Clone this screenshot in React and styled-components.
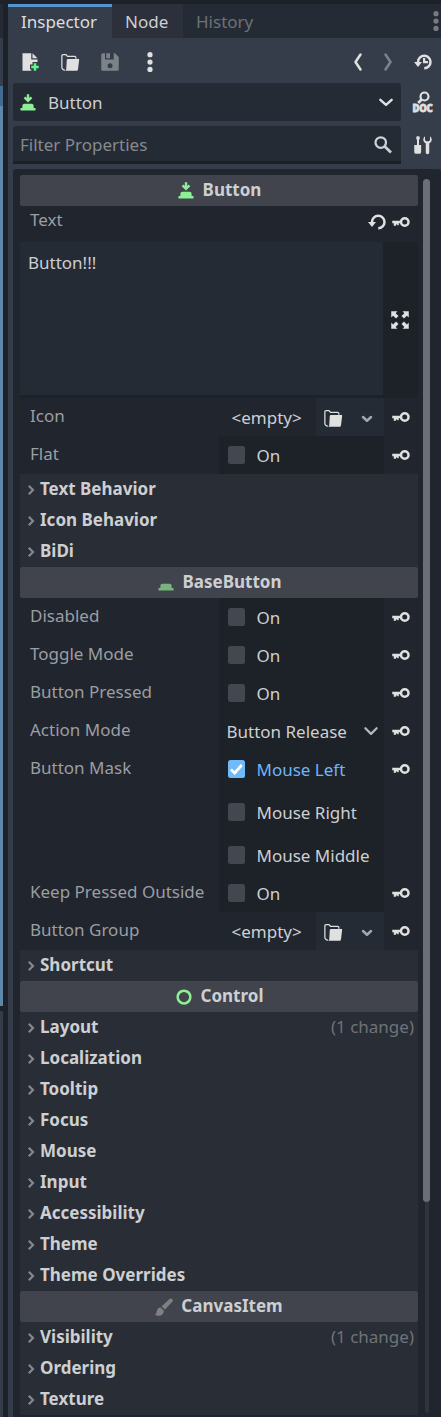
import React from "react";
import styled, { createGlobalStyle } from "styled-components";

const Global = createGlobalStyle`
  * { box-sizing: border-box; }
  body { margin: 0; background: #1d2229; overflow: hidden; }
`;

const Screen = styled.div`
  display: flex;
  width: 441px;
  height: 1417px;
  overflow: hidden;
  background: #1d2229;
  color: #cdcfd2;
  font: 17px/24px "Noto Sans", sans-serif;
  white-space: nowrap;
`;

const Viewport = styled.div`
  width: 8px;
  flex: none;
  display: flex;
  flex-direction: column;
  padding-right: 5px;
`;
const Strip = styled.div`
  height: ${(p) => p.$h}px;
  flex: none;
  background: ${(p) => p.$c};
`;

const Dock = styled.div`
  width: 433px;
  flex: none;
  display: flex;
  flex-direction: column;
  padding-top: 4px;
`;
const TabBar = styled.div`
  height: 34px;
  flex: none;
  display: flex;
  background: #252b34;
`;
const Tab = styled.div`
  width: ${(p) => p.$w}px;
  padding: ${(p) => (p.$active ? "3px" : "6px")} 0 0 13px;
  color: ${(p) => (p.$active ? "#dcdddf" : p.$dim ? "#6c7178" : "#cdcfd2")};
  background: ${(p) => (p.$active ? "#363d4a" : p.$dim ? "#252b34" : "#2b303b")};
  border-top: ${(p) => (p.$active ? "3px solid #5694ce" : "none")};
`;
const TabMenu = styled.div`
  margin-left: auto;
  width: 15px;
  padding-top: 7px;
`;
const DockBody = styled.div`
  flex: 1;
  min-height: 0;
  background: #363d4a;
  padding-left: 5px;
  display: flex;
  flex-direction: column;
`;
const Toolbar = styled.div`
  height: 45px;
  padding: 3px 8px 0 7px;
  display: flex;
  align-items: center;
  gap: 20px;
  flex: none;
`;
const History = styled.div`
  margin-left: auto;
  display: flex;
  gap: 10px;
`;
const RecentButton = styled.div`
  padding-left: 5px;
`;
const FieldRow = styled.div`
  display: flex;
  height: 38px;
  margin-bottom: 5px;
  flex: none;
`;
const Field = styled.div`
  width: 388px;
  background: #252b34;
  border-radius: 3px 3px ${(p) => (p.$line ? "0 0" : "3px 3px")};
  border-bottom: ${(p) => (p.$line ? "3px solid #1c2027" : "none")};
  padding: ${(p) => (p.$line ? "2px 8px 0 7px" : "1px 5px 0 5px")};
  display: flex;
  align-items: center;
  color: ${(p) => (p.$line ? "#868a8f" : "#cdcfd2")};
`;
const FieldText = styled.span`
  flex: 1;
  padding-left: ${(p) => p.$pad || 0}px;
`;
const SideButton = styled.div`
  width: 40px;
  display: flex;
  align-items: center;
  justify-content: center;
  padding-left: 4px;
`;
const DocButton = styled(SideButton)`
  flex-direction: column;
  justify-content: flex-start;
  padding: 8px 0 0 3px;
`;
const DocText = styled.span`
  font: 900 9.5px/9px "Noto Sans", sans-serif;
  color: #e0e0e0;
  -webkit-text-stroke: 0.7px #e0e0e0;
  letter-spacing: -0.2px;
  transform: scaleY(1.12);
`;

const Panel = styled.div`
  flex: 1;
  min-height: 0;
  background: #21252e;
  border-radius: 3px 3px 0 0;
  padding: 6px 0 0 7px;
  display: flex;
`;
const List = styled.div`
  width: 398px;
  flex: none;
`;
const Category = styled.div`
  height: 31px;
  background: #41444c;
  border-radius: 2px;
  display: flex;
  justify-content: center;
  align-items: center;
  gap: 7px;
  padding: 0 1px 2px 0;
  font-weight: 700;
  svg { margin-top: 3px; }
`;
const Section = styled.div`
  height: 31px;
  background: #292d35;
  display: flex;
  align-items: center;
  padding: 0 4px 1px 6px;
`;
const SectionName = styled.span`
  flex: 1;
  font-weight: 700;
  padding-left: 4px;
`;
const Changes = styled.span`
  color: #6f7379;
`;
const Property = styled.div`
  display: flex;
  height: ${(p) => p.$h || 38}px;
`;
const Label = styled.div`
  width: ${(p) => p.$w || 199}px;
  padding: ${(p) => p.$top || 6}px 0 0 10px;
  color: #9b9ea2;
`;
const Value = styled.div`
  width: 165px;
  background: ${(p) => (p.$plain ? "transparent" : "#1d2128")};
  border-radius: 2px;
  display: flex;
  flex-direction: column;
  gap: 5px;
`;
const Check = styled.div`
  height: 38px;
  display: flex;
  align-items: center;
  padding: 1px 0 0 9px;
  gap: 11.5px;
  color: ${(p) => (p.$on ? "#6fb5f7" : "#cdcfd2")};
`;
const Box = styled.div`
  width: 17px;
  height: 18px;
  margin-top: -1px;
  border-radius: 2.5px;
  background: ${(p) => (p.$on ? "#70bafa" : "#434750")};
  display: flex;
  svg { width: 17px; height: 18px; }
`;
const Choice = styled.div`
  height: 38px;
  display: flex;
  align-items: center;
  justify-content: space-between;
  padding: 1px 3px 0 7.5px;
`;
const Resource = styled.div`
  display: flex;
  height: 38px;
`;
const Empty = styled.div`
  width: 97px;
  padding: 8px 0 0 12.5px;
`;
const ResButton = styled.div`
  width: ${(p) => p.$w}px;
  background: #252b34;
  display: flex;
  align-items: center;
  justify-content: center;
  padding-top: 1px;
`;
const Keys = styled.div`
  padding: ${(p) => p.$top || 9}px 0 0 7px;
  display: flex;
  gap: 4px;
`;
const Editor = styled.div`
  display: flex;
  height: 156px;
`;
const TextArea = styled.div`
  width: 363px;
  background: #252b34;
  border-radius: 3px 3px 0 0;
  border-bottom: 3px solid #1d2128;
  padding: 9px 8px;
`;
const Expand = styled.div`
  width: 35px;
  background: #1d2128;
  border-radius: 0 3px 3px 0;
  display: flex;
  align-items: center;
  justify-content: center;
  padding-right: 1px;
`;
const ScrollTrack = styled.div`
  width: 17px;
  padding: 4px 0 4px 5px;
  display: flex;
  flex-direction: column;
`;
const Grabber = styled.div`
  width: 7px;
  height: 1023px;
  flex: none;
  border-radius: 4px;
  background: #6c6f75;
`;
const Track = styled.div`
  width: 4px;
  margin-left: 2px;
  flex: 1;
  background: #30343d;
  border-radius: 0 0 2px 2px;
`;

const Svg = styled.svg`
  width: 20px;
  height: 20px;
  flex: none;
  display: block;
  overflow: visible;
`;
const Icon = ({ children, ...rest }) => (
  <Svg viewBox="0 0 16 16" fill="#e0e0e0" {...rest}>{children}</Svg>
);

const NewIcon = () => (
  <Icon>
    <path d="M2 1h7v5h5v2h-4v2H8v4h1v1H2z" />
    <path d="M10 1v4h4z" />
    <path fill="#5ff48a" d="M11 9h2v2h2v2h-2v2h-2v-2H9v-2h2z" />
  </Icon>
);
const LoadIcon = () => (
  <Icon>
    <path fill="none" stroke="#e0e0e0" d="M4 14.4a2.2 2.2 0 0 1-2.5-2.2V3a1 1 0 0 1 1-1h2.3l1.2 1.5h5.7a1 1 0 0 1 1 1v.8" />
    <path d="M6.3 5.5h8.2a.8.8 0 0 1 .8.9l-.9 7.4a1.3 1.3 0 0 1-1.3 1.2H3.6c1 0 1.3-.6 1.4-1.5l.4-7a1 1 0 0 1 .9-1z" />
  </Icon>
);
const SaveIcon = () => (
  <Icon fill="#7d8189">
    <path fillRule="evenodd" d="M2.2 1H4v5h7V1h1l3 3v9.8a1.2 1.2 0 0 1-1.2 1.2H2.2A1.2 1.2 0 0 1 1 13.8V2.2A1.2 1.2 0 0 1 2.2 1zM8 9a2 2 0 1 0 0 4 2 2 0 0 0 0-4z" />
    <path d="M5 1h3v4H5z" />
  </Icon>
);
const DotsIcon = ({ color = "#e0e0e0" }) => (
  <Icon fill={color}>
    <circle cx="8" cy="2.1" r="2.1" />
    <circle cx="8" cy="8" r="2.1" />
    <circle cx="8" cy="13.9" r="2.1" />
  </Icon>
);
const Stroke = ({ d, color = "#e0e0e0", w = 2 }) => (
  <Icon>
    <path d={d} fill="none" stroke={color} strokeWidth={w} strokeLinecap="round" strokeLinejoin="round" />
  </Icon>
);
const RevertIcon = ({ clock }) => (
  <Icon>
    <path d="M4 9V8a5 5 0 1 1 5 5" fill="none" stroke="#e0e0e0" strokeWidth="2" />
    <path d="M.8 8h6.4L4 12z" />
    {clock && <path d="M8 4.8h1.8v2.4H12V9H8z" />}
  </Icon>
);
const KeyIcon = () => (
  <Icon>
    <circle cx="11" cy="8" r="3" fill="none" stroke="#e0e0e0" strokeWidth="2" />
    <path d="M1 7h7.4v2H6.2v1.6H5V10H4v1H2.2V9H1z" />
  </Icon>
);
const base = "M5.2 8.5h5.6A1.7 1.7 0 0 1 12.5 10.2V12H14v2H2v-2h1.5v-1.8A1.7 1.7 0 0 1 5.2 8.5z";
const ButtonIcon = () => (
  <Icon fill="#8eef97">
    <path d="M8 1v4.5M5.2 3.5L8 6.2l2.8-2.7" fill="none" stroke="#8eef97" strokeWidth="1.9" />
    <path d={base} />
  </Icon>
);
const BaseButtonIcon = () => (
  <Icon fill="#78b37d">
    <path d={base} />
  </Icon>
);
const ControlIcon = () => (
  <Icon>
    <circle cx="8" cy="8" r="5.1" fill="none" stroke="#8eef97" strokeWidth="2" />
  </Icon>
);
const BrushIcon = () => (
  <Icon fill="#808080">
    <path d="M13.2 1.2a1.6 1.6 0 0 1 1.6 2.4L8.8 10 6 7.500l6.400-6a1.500 1.500 0 0 1 .8-.3z" />
    <path d="M5.200 8.400l2.600 2.400c.1 2.600-1.700 4.200-3.800 4.200-1.300 0-2.500-.5-3.400-1.500 1.400 0 1.400-.8 1.600-2.200.3-1.700 1.400-2.700 3-2.900z" />
  </Icon>
);
const ExpandIcon = () => (
  <Icon>
    {[0, 90, 180, 270].map((a) => (
      <path key={a} transform={`rotate(${a} 8 8)`} d="M1 1h5L4.500 2.500l2.300 2.300-2 2-2.300-2.300L1 6z" />
    ))}
  </Icon>
);
const SearchIcon = () => (
  <Icon>
    <circle cx="6.2" cy="6" r="4.2" fill="none" stroke="#cfd1d4" strokeWidth="1.8" />
    <path d="M9.200 9l5.200 5" stroke="#cfd1d4" strokeWidth="2.2" />
  </Icon>
);
const ToolsIcon = () => (
  <Icon>
    <path d="M3 1h2l.5 1.500L4.800 4v4h1.700v5.500A1.500 1.500 0 0 1 5 15H2.500A1.500 1.500 0 0 1 1 13.500V8h2.200V4l-.7-1.500z" />
    <path d="M9.600 1A3.300 3.300 0 0 0 8.200 3.600c0 1.300.8 2.500 2 3V14a1.400 1.400 0 0 0 2.800 0V6.600c1.200-.5 2-1.700 2-3A3.300 3.300 0 0 0 13.600 1v3.100l-1 .9h-2l-1-.9z" />
  </Icon>
);
const LensIcon = styled.svg`
  width: 20px;
  height: 13px;
  flex: none;
`;
const Arrow = styled.svg`
  width: 10px;
  height: 12px;
  flex: none;
  margin-top: 1px;
`;

const CheckRow = ({ on, children }) => (
  <Check $on={on}>
    <Box $on={on}>
      {on && (
        <svg viewBox="0 0 17 18">
          <path d="M3 9.500l3.700 3.500L13.800 5" fill="none" stroke="#fff" strokeWidth="2.700" />
        </svg>
      )}
    </Box>
    {children}
  </Check>
);
const Prop = ({ name, h, plain, children }) => (
  <Property $h={h}>
    <Label>{name}</Label>
    <Value $plain={plain}>{children}</Value>
    <Keys><KeyIcon /></Keys>
  </Property>
);
const Toggle = ({ name }) => <Prop name={name}><CheckRow>On</CheckRow></Prop>;
const ResourceProp = ({ name }) => (
  <Prop name={name} plain>
    <Resource>
      <Empty>&lt;empty&gt;</Empty>
      <ResButton $w={34}><LoadIcon /></ResButton>
      <ResButton $w={34}><Stroke d="M4.800 7.200L8 10.200l3.200-3" color="#a5a7aa" /></ResButton>
    </Resource>
  </Prop>
);
const Group = ({ name, changes }) => (
  <Section>
    <Arrow viewBox="0 0 10 12">
      <path d="M2.800 1.700L7 6l-4.200 4.300" fill="none" stroke="#85888d" strokeWidth="2.200" />
    </Arrow>
    <SectionName>{name}</SectionName>
    {changes && <Changes>{changes}</Changes>}
  </Section>
);

const controlGroups = ["Localization", "Tooltip", "Focus", "Mouse", "Input", "Accessibility", "Theme", "Theme Overrides"];

export default function App() {
  return (
    <Screen>
      <Global />
      <Viewport>
        <Strip $h={4} $c="#1d2229" />
        <Strip $h={34} $c="#252b34" />
        <Strip $h={48} $c="#363d4a" />
        <Strip $h={20} $c="#426b92" />
        <Strip $h={103} $c="#5d88aa" />
        <Strip $h={1} $c="#a0709c" />
        <Strip $h={796} $c="#5d88aa" />
        <Strip $h={5} $c="#1d2229" />
        <Strip $h={406} $c="#363d4a" />
      </Viewport>
      <Dock>
        <TabBar>
          <Tab $w={104} $active>Inspector</Tab>
          <Tab $w={71}>Node</Tab>
          <Tab $w={90} $dim>History</Tab>
          <TabMenu><DotsIcon color="#777a7f" /></TabMenu>
        </TabBar>
        <DockBody>
          <Toolbar>
            <NewIcon />
            <LoadIcon />
            <SaveIcon />
            <DotsIcon />
            <History>
              <Stroke d="M10 2L6 8l4 6" />
              <Stroke d="M6 2l4 6-4 6" color="#7d8189" />
              <RecentButton><RevertIcon clock /></RecentButton>
            </History>
          </Toolbar>
          <FieldRow>
            <Field>
              <ButtonIcon />
              <FieldText $pad={10}>Button</FieldText>
              <Stroke d="M3.500 5.500L8 9.500l4.500-4" />
            </Field>
            <DocButton>
              <LensIcon viewBox="0 0 20 13">
                <circle cx="11.500" cy="5.500" r="4" fill="none" stroke="#e0e0e0" strokeWidth="2.200" />
                <path d="M8.800 8.200l-3.600 3.800" stroke="#e0e0e0" strokeWidth="2.800" />
              </LensIcon>
              <DocText>DOC</DocText>
            </DocButton>
          </FieldRow>
          <FieldRow>
            <Field $line>
              <FieldText>Filter Properties</FieldText>
              <SearchIcon />
            </Field>
            <SideButton><ToolsIcon /></SideButton>
          </FieldRow>
          <Panel>
            <List>
              <Category><ButtonIcon />Button</Category>
              <Property $h={36}>
                <Label $w={340} $top={2}>Text</Label>
                <Keys $top={5.5}><RevertIcon /><KeyIcon /></Keys>
              </Property>
              <Editor>
                <TextArea>Button!!!</TextArea>
                <Expand><ExpandIcon /></Expand>
              </Editor>
              <ResourceProp name="Icon" />
              <Toggle name="Flat" />
              <Group name="Text Behavior" />
              <Group name="Icon Behavior" />
              <Group name="BiDi" />
              <Category><BaseButtonIcon />BaseButton</Category>
              <Toggle name="Disabled" />
              <Toggle name="Toggle Mode" />
              <Toggle name="Button Pressed" />
              <Prop name="Action Mode">
                <Choice>Button Release<Stroke d="M3.500 5l4.500 4.500L12.500 5" color="#b5b7ba" w={1.8} /></Choice>
              </Prop>
              <Prop name="Button Mask" h={124}>
                <CheckRow on>Mouse Left</CheckRow>
                <CheckRow>Mouse Right</CheckRow>
                <CheckRow>Mouse Middle</CheckRow>
              </Prop>
              <Toggle name="Keep Pressed Outside" />
              <ResourceProp name="Button Group" />
              <Group name="Shortcut" />
              <Category><ControlIcon />Control</Category>
              <Group name="Layout" changes="(1 change)" />
              {controlGroups.map((g) => <Group key={g} name={g} />)}
              <Category><BrushIcon />CanvasItem</Category>
              <Group name="Visibility" changes="(1 change)" />
              <Group name="Ordering" />
              <Group name="Texture" />
            </List>
            <ScrollTrack><Grabber /><Track /></ScrollTrack>
          </Panel>
        </DockBody>
      </Dock>
    </Screen>
  );
}
